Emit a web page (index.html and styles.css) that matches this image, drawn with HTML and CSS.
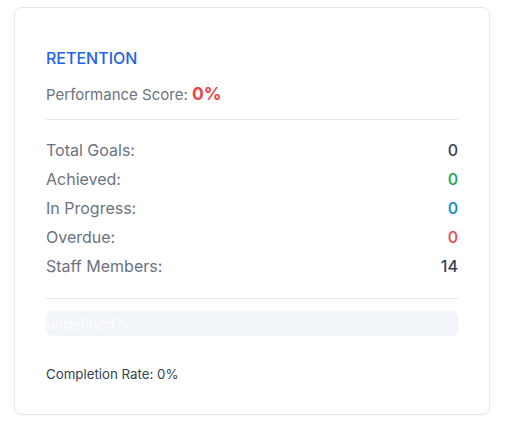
FILE: index.html
```html
<!DOCTYPE html>
<html lang="en">
<head>
<meta charset="utf-8">
<title>Retention</title>
<link rel="stylesheet" href="styles.css">
</head>
<body>
<div class="card">
  <h3 class="title">RETENTION</h3>
  <p class="score">Performance Score: <span class="score-value">0%</span></p>
  <hr class="divider divider-top">
  <div class="stats">
    <div class="row"><span class="label">Total Goals:</span><span class="value">0</span></div>
    <div class="row"><span class="label">Achieved:</span><span class="value green">0</span></div>
    <div class="row"><span class="label">In Progress:</span><span class="value blue">0</span></div>
    <div class="row"><span class="label">Overdue:</span><span class="value red">0</span></div>
    <div class="row"><span class="label">Staff Members:</span><span class="value">14</span></div>
  </div>
  <hr class="divider">
  <div class="progress"><div class="progress-fill">undefined%</div></div>
  <p class="completion">Completion Rate: 0%</p>
</div>
</body>
</html>
```
FILE: styles.css
```css
* { box-sizing: border-box; }
html, body { background: #ffffff; }
body {
  margin: 0;
  padding: 7px 16px 7px 14px;
  font-family: Inter, "Noto Sans", sans-serif;
}
.card {
  border: 1px solid #e5e7eb;
  border-radius: 8px;
  padding: 38px 31px 30px;
  background: #fff;
  box-shadow: 0 1px 2px rgba(0,0,0,0.04);
}
.title {
  margin: 0;
  font-size: 16px;
  line-height: 24px;
  font-weight: 500;
  color: #2563eb;
}
.score {
  margin: 10px 0 0;
  font-size: 15px;
  line-height: 28px;
  color: #6b7280;
}
.score-value {
  font-size: 17.5px;
  font-weight: 700;
  color: #ef4444;
}
.divider {
  border: 0;
  border-top: 1px solid #e5e7eb;
  margin: 0;
}
.divider-top { margin-top: 10px; }
.stats {
  padding: 15px 0 18px;
  display: flex;
  flex-direction: column;
}
.row {
  display: flex;
  justify-content: space-between;
  align-items: center;
  height: 29px;
  font-size: 16px;
}
.label { color: #6b7280; }
.value { color: #374151; font-weight: 500; }
.value.green { color: #16a34a; }
.value.blue { color: #0284c7; }
.value.red { color: #ef4444; }
.progress {
  margin-top: 12px;
  height: 25px;
  border-radius: 6px;
  background: #f1f5f9;
  overflow: hidden;
}
.progress-fill {
  height: 100%;
  color: #ffffff;
  font-size: 14.5px;
  line-height: 25px;
  white-space: nowrap;
}
.completion {
  margin: 28px 0 0;
  font-size: 13.3px;
  line-height: 20px;
  color: #374151;
}
```
